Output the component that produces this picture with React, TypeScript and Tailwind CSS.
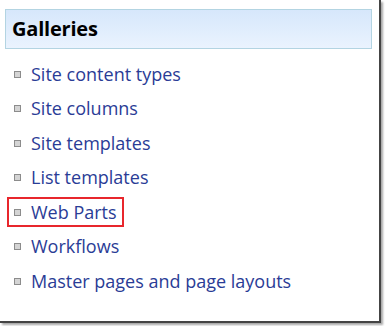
import React from 'react'

const items = [
  'Site content types',
  'Site columns',
  'Site templates',
  'List templates',
  'Web Parts',
  'Workflows',
  'Master pages and page layouts',
]

const Bullet = () => (
  <span className="mr-[10px] inline-block h-[7px] w-[7px] shrink-0 border border-[#8c8c8c] bg-[#d4d4d4]" />
)

export default function App() {
  return (
    <div className="h-[326px] w-[385px] bg-white" style={{ fontFamily: '"Open Sans", "Noto Sans", sans-serif' }}>
      <div className="flex h-[326px] w-[385px]">
        <div className="h-[323px] w-[381px] border-r-[2px] border-b-[2px] border-[#444] bg-white shadow-[2px_2px_2px_rgba(0,0,0,0.35)]">
          <div className="ml-[5px] mr-[7px] mt-[9px] flex h-[40px] items-center border border-[#b3d4e2] bg-gradient-to-b from-[#d6e7fb] to-[#eaf3fe] px-[6px]">
            <span className="text-[20px] font-bold tracking-[-0.2px] text-black">Galleries</span>
          </div>
          <ul className="mt-[8px] flex flex-col">
            {items.map((item) => (
              <li key={item} className="flex h-[34.5px] items-center pl-[7px]">
                <div
                  className={
                    item === 'Web Parts'
                      ? 'flex h-[30px] items-center border-[2px] border-[#e8262c] pl-[5px] pr-[5px]'
                      : 'flex h-[30px] items-center border-[2px] border-transparent pl-[5px] pr-[5px]'
                  }
                >
                  <Bullet />
                  <span className="text-[18px] text-[#2a3c96]">{item}</span>
                </div>
              </li>
            ))}
          </ul>
        </div>
      </div>
    </div>
  )
}
